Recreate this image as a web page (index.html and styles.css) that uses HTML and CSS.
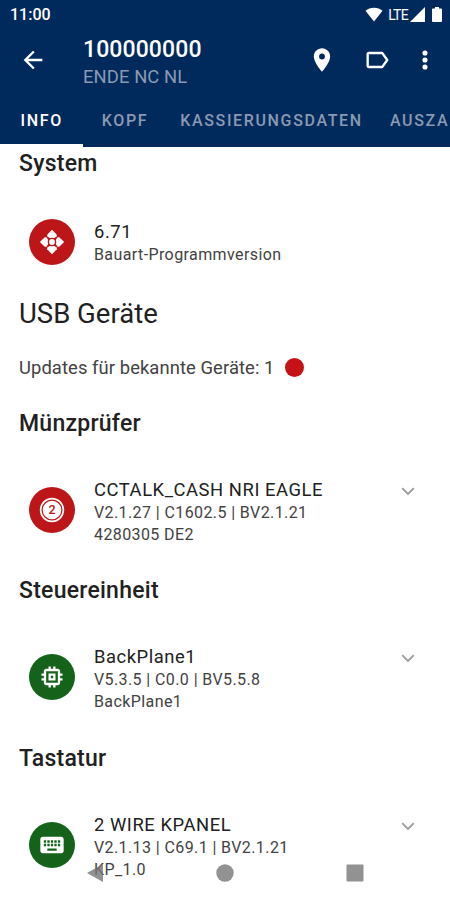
FILE: index.html
```
<!DOCTYPE html>
<html lang="de">
<head>
    <meta charset="UTF-8">
    <meta name="viewport" content="width=device-width, initial-scale=1.0">
    <title>100000000</title>
    <link rel="stylesheet" href="styles.css">
</head>
<body>
    <header class="header">
        <div class="status-bar">
            <span class="clock">11:00</span>
            <svg class="wifi" width="18" height="15" viewBox="0 0 18 15"><path d="M9 14.500L.5 3.800C5-.3 13-.3 17.500 3.800z"/></svg>
            <span class="lte">LTE</span>
            <svg class="signal" width="15" height="15" viewBox="0 0 15 15"><path d="M15 0v15H0z"/></svg>
            <svg class="battery" width="10" height="15" viewBox="0 0 10 15"><path d="M3 0h4v1.500h2q1 0 1 1V14q0 1-1 1H1q-1 0-1-1V2.500q0-1 1-1h2z"/></svg>
        </div>
        <div class="app-bar">
            <svg class="back" width="28" height="28" viewBox="0 0 24 24"><path d="M20 11H7.830l5.590-5.590L12 4l-8 8 8 8 1.410-1.410L7.830 13H20z"/></svg>
            <div class="titles">
                <div class="title">100000000</div>
                <div class="subtitle">ENDE NC NL</div>
            </div>
            <svg class="place" width="28" height="28" viewBox="0 0 24 24"><path d="M12 2C8.130 2 5 5.130 5 9c0 5.250 7 13 7 13s7-7.750 7-13c0-3.870-3.130-7-7-7zm0 9.500a2.500 2.500 0 0 1 0-5 2.500 2.500 0 0 1 0 5z"/></svg>
            <svg class="label" width="28" height="28" viewBox="0 0 24 24"><path d="M17.630 5.840C17.270 5.330 16.670 5 16 5L5 5.010C3.900 5.010 3 5.900 3 7v10c0 1.100.9 1.990 2 1.990L16 19c.67 0 1.270-.33 1.630-.84L22 12l-4.370-6.160zM16 17H5V7h11l3.550 5L16 17z"/></svg>
            <svg class="more" width="28" height="28" viewBox="0 0 24 24"><circle cx="12" cy="6" r="2.200"/><circle cx="12" cy="12" r="2.200"/><circle cx="12" cy="18" r="2.200"/></svg>
        </div>
        <nav class="tabs">
            <a class="tab active">INFO</a>
            <a class="tab">KOPF</a>
            <a class="tab">KASSIERUNGSDATEN</a>
            <a class="tab">AUSZA</a>
        </nav>
    </header>

    <main class="content">
        <section class="section system">
            <h2>System</h2>
            <div class="item">
                <div class="icon red">
                    <svg width="28" height="28" viewBox="0 0 28 28">
                        <path d="M14 1.800l4.800 5v1.700L14 11.300 9.200 8.500V6.800z"/>
                        <path d="M26.200 14l-5 4.800h-1.700L16.700 14l2.800-4.800h1.700z"/>
                        <path d="M14 26.200l-4.800-5v-1.700l4.800-2.800 4.800 2.800v1.700z"/>
                        <path d="M1.800 14l5-4.800h1.700l2.800 4.800-2.800 4.800H6.800z"/>
                        <circle class="hub" cx="14" cy="14" r="3.600"/>
                    </svg>
                </div>
                <div class="text">
                    <div class="name">6.71</div>
                    <div class="detail">Bauart-Programmversion</div>
                </div>
            </div>
        </section>

        <h1>USB Geräte</h1>
        <div class="updates">Updates für bekannte Geräte: 1 <span class="dot"></span></div>

        <section class="section">
            <h2>Münzprüfer</h2>
            <div class="item">
                <div class="icon red">
                    <svg width="28" height="28" viewBox="0 0 28 28">
                        <circle cx="14" cy="14" r="12.200"/>
                        <circle class="ring" cx="14" cy="14" r="9.900"/>
                        <text class="coin" x="14" y="18.300" text-anchor="middle">2</text>
                    </svg>
                </div>
                <div class="text">
                    <div class="name">CCTALK_CASH NRI EAGLE</div>
                    <div class="detail">V2.1.27 | C1602.5 | BV2.1.21</div>
                    <div class="detail">4280305 DE2</div>
                </div>
                <svg class="chevron" width="28" height="28" viewBox="0 0 24 24"><path d="M7 9.500l5 5 5-5"/></svg>
            </div>
        </section>

        <section class="section">
            <h2>Steuereinheit</h2>
            <div class="item">
                <div class="icon green">
                    <svg width="28" height="28" viewBox="0 0 24 24"><path fill-rule="evenodd" d="M15 9H9v6h6V9zm-2 4h-2v-2h2v2zm8-2V9h-2V7c0-1.100-.9-2-2-2h-2V3h-2v2h-2V3H9v2H7c-1.100 0-2 .9-2 2v2H3v2h2v2H3v2h2v2c0 1.100.9 2 2 2h2v2h2v-2h2v2h2v-2h2c1.100 0 2-.9 2-2v-2h2v-2h-2v-2h2zm-4 6H7V7h10v10z"/></svg>
                </div>
                <div class="text">
                    <div class="name">BackPlane1</div>
                    <div class="detail">V5.3.5 | C0.0 | BV5.5.8</div>
                    <div class="detail">BackPlane1</div>
                </div>
                <svg class="chevron" width="28" height="28" viewBox="0 0 24 24"><path d="M7 9.500l5 5 5-5"/></svg>
            </div>
        </section>

        <section class="section">
            <h2>Tastatur</h2>
            <div class="item">
                <div class="icon green">
                    <svg width="28" height="28" viewBox="0 0 24 24"><path d="M20 5H4c-1.100 0-1.990.9-1.990 2L2 17c0 1.100.9 2 2 2h16c1.100 0 2-.9 2-2V7c0-1.100-.9-2-2-2zm-9 3h2v2h-2V8zm0 3h2v2h-2v-2zM8 8h2v2H8V8zm0 3h2v2H8v-2zm-1 2H5v-2h2v2zm0-3H5V8h2v2zm9 7H8v-2h8v2zm0-4h-2v-2h2v2zm0-3h-2V8h2v2zm3 3h-2v-2h2v2zm0-3h-2V8h2v2z"/></svg>
                </div>
                <div class="text">
                    <div class="name">2 WIRE KPANEL</div>
                    <div class="detail">V2.1.13 | C69.1 | BV2.1.21</div>
                    <div class="detail">KP_1.0</div>
                </div>
                <svg class="chevron" width="28" height="28" viewBox="0 0 24 24"><path d="M7 9.500l5 5 5-5"/></svg>
            </div>
        </section>
    </main>

    <div class="nav-bar">
        <svg width="18" height="20" viewBox="0 0 18 20"><path d="M17 1v18L1 10z"/></svg>
        <svg width="18" height="18" viewBox="0 0 18 18"><circle cx="9" cy="9" r="8.700"/></svg>
        <svg width="18" height="18" viewBox="0 0 18 18"><rect x=".5" y=".5" width="17" height="17" rx="1"/></svg>
    </div>
</body>
</html>
```
FILE: styles.css
```
* {
    box-sizing: border-box;
}
body {
    margin: 0;
    height: 900px;
    position: relative;
    overflow: hidden;
    font-family: Roboto, "Liberation Sans", sans-serif;
    color: #212121;
    background-color: #fff;
}
svg {
    display: block;
    flex-shrink: 0;
    fill: #fff;
}
.header {
    height: 147px;
    background-color: #002a5c;
    color: #fff;
}
.status-bar {
    display: flex;
    align-items: center;
    height: 28px;
    padding: 1px 8px 0 10px;
    font-size: 16px;
    font-weight: 500;
}
.clock {
    margin-right: auto;
}
.wifi {
    margin-right: 5px;
}
.lte {
    margin-right: 2px;
    font-size: 14px;
    font-weight: 400;
    letter-spacing: -0.7px;
}
.battery {
    margin-left: 7px;
}
.app-bar {
    display: flex;
    align-items: center;
    height: 64px;
    padding: 0 11px 0 19px;
}
.titles {
    flex: 1;
    margin-left: 36px;
    padding-top: 5px;
}
.title {
    font-size: 23px;
    font-weight: 500;
    line-height: 27px;
    letter-spacing: 0.1px;
}
.subtitle {
    font-size: 18.4px;
    line-height: 27px;
    letter-spacing: 0.1px;
    color: #8a9ab3;
}
.label {
    margin-left: 27px;
}
.more {
    margin-left: 20px;
}
.tabs {
    display: flex;
    height: 55px;
    overflow: hidden;
}
.tab {
    display: flex;
    align-items: center;
    justify-content: center;
    flex-shrink: 0;
    min-width: 83.3px;
    padding: 4px 13.6px 0;
    border-bottom: 3px solid transparent;
    font-size: 16px;
    font-weight: 500;
    letter-spacing: 1.65px;
    color: #8a9ab3;
}
.tab.active {
    color: #fff;
    border-bottom-color: #fff;
}
.content {
    padding: 3px 19px 0;
}
h1, h2 {
    margin: 0;
}
h1 {
    height: 32px;
    font-size: 27.5px;
    font-weight: 400;
    line-height: 32px;
}
h2 {
    height: 28px;
    font-size: 23px;
    font-weight: 500;
    line-height: 28px;
    letter-spacing: 0.25px;
}
.section {
    height: 167.5px;
}
.section.system {
    height: 148px;
}
.item {
    display: flex;
    padding: 39px 9px 0 10px;
}
.system .item {
    padding-top: 41px;
}
.icon {
    display: flex;
    align-items: center;
    justify-content: center;
    width: 46px;
    height: 46px;
    margin-top: 10px;
    border-radius: 50%;
}
.system .icon {
    margin-top: 0;
}
.red {
    background-color: #bd1619;
}
.green {
    background-color: #15631b;
}
.hub {
    stroke: #bd1619;
    stroke-width: 1.4;
}
.ring {
    stroke: #bd1619;
    stroke-width: 1.2;
}
.coin {
    font-size: 12.5px;
    font-weight: 500;
    fill: #bd1619;
}
.text {
    flex: 1;
    margin-left: 19px;
    padding-top: 1px;
}
.name {
    font-size: 18.4px;
    line-height: 24px;
    letter-spacing: 0.55px;
}
.detail {
    font-size: 16px;
    line-height: 22px;
    letter-spacing: 0.4px;
    color: #424242;
}
.chevron {
    fill: none;
    stroke: #9e9e9e;
    stroke-width: 1.7;
}
.updates {
    display: flex;
    align-items: center;
    height: 24px;
    margin: 25px 0 30.8px;
    font-size: 18.4px;
    letter-spacing: 0.08px;
    color: #424242;
}
.dot {
    width: 19px;
    height: 19px;
    margin-left: 10px;
    border-radius: 50%;
    background-color: #c51216;
}
/* android navigation buttons over the list */
.nav-bar {
    position: absolute;
    left: 0;
    right: 0;
    bottom: 0;
    display: flex;
    align-items: center;
    justify-content: space-between;
    height: 55px;
    padding: 0 86px;
}
.nav-bar svg {
    fill: #777;
    opacity: 0.8;
}
```
